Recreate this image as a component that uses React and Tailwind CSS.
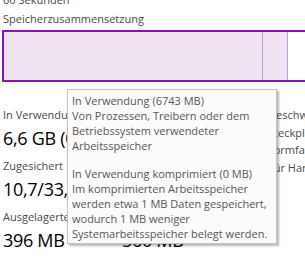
const font = { fontFamily: '"Open Sans", "Noto Sans", sans-serif' };

function Stat({ label, value }) {
    return (
        <div className="mb-[5px]">
            <div className="h-4 text-[11px] leading-4 whitespace-nowrap text-[#4c4c4c]">{label}</div>
            <div className="h-[30px] text-[18px] leading-[30px] tracking-[-0.3px] whitespace-nowrap text-black">{value}</div>
        </div>
    );
}

function Tooltip() {
    return (
        <div className="absolute left-[67px] top-[89px] w-[210px] h-[155px] border border-[#c4c4c4] bg-[#fbfbfb] px-[4px] pt-[3px] text-[11px] leading-[15px] whitespace-nowrap text-[#575757] shadow-[2px_2px_2px_rgba(0,0,0,0.28)]">
            <p>In Verwendung (6743 MB)</p>
            <p>Von Prozessen, Treibern oder dem</p>
            <p>Betriebssystem verwendeter</p>
            <p>Arbeitsspeicher</p>
            <p className="mt-[13px]">In Verwendung komprimiert (0 MB)</p>
            <p>Im komprimierten Arbeitsspeicher</p>
            <p>werden etwa 1 MB Daten gespeichert,</p>
            <p>wodurch 1 MB weniger</p>
            <p>Systemarbeitsspeicher belegt werden.</p>
        </div>
    );
}

export default function App() {
    return (
        <div className="relative w-[305px] h-[261px] overflow-hidden bg-white pl-[2px]" style={font}>
            <div className="-mt-[8px] ml-[1px] h-4 text-[11px] leading-4 text-[#4c4c4c]">60 Sekunden</div>
            <div className="mt-[3px] ml-[1px] h-4 text-[11px] leading-4 text-[#4c4c4c]">Speicherzusammensetzung</div>
            <div className="mt-[3px] flex h-[52px] w-[330px] border-2 border-[#8b12ae]">
                <div className="w-[259px] shrink-0 border-r border-[#c99cd9] bg-[#efe4f2]" />
                <div className="w-[25px] shrink-0 border-r border-[#c99cd9] bg-[#efe4f2]" />
                <div className="flex-1 bg-white" />
            </div>
            <div className="mt-[25px] flex w-[420px]">
                <div className="ml-[1px] w-[119px] shrink-0">
                    <Stat label="In Verwendung (komprimiert)" value="6,6 GB (0 MB)" />
                    <Stat label="Zugesichert" value="10,7/33,2 GB" />
                    <Stat label="Ausgelagerter Pool" value="396 MB" />
                </div>
                <div className="w-[146px] shrink-0">
                    <Stat label="Verfügbar" value="9,2 GB" />
                    <Stat label="Zwischengespeichert" value="8,9 GB" />
                    <Stat label="Nicht ausgelagerter Pool" value="560 MB" />
                </div>
                <div className="-mt-[1px] shrink-0 text-[11px] leading-[17.5px] whitespace-nowrap text-[#4c4c4c]">
                    <p>Geschwindigkeit:</p>
                    <p>Steckplätze verwendet:</p>
                    <p>Formfaktor:</p>
                    <p>Für Hardware reserviert:</p>
                </div>
            </div>
            <Tooltip />
        </div>
    );
}
